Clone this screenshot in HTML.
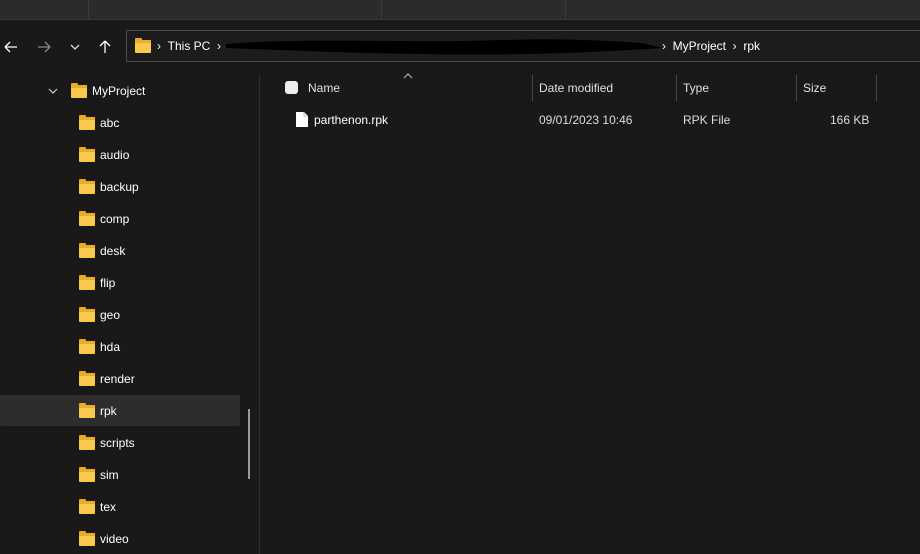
<!DOCTYPE html>
<html><head><style>
body{margin:0;width:920px;height:554px;background:#191919;font-family:"Liberation Sans",sans-serif;color:#fff;overflow:hidden;position:relative;font-size:12px}
.a{position:absolute}
.top{left:0;top:0;width:920px;height:19px;background:#2b2b2b;border-bottom:1px solid #3a3a3a}
.vd{width:1px;height:19px;background:#3c3c3c;top:0}
.addr{left:126px;top:30px;width:800px;height:32px;border:1px solid #4a4a4a;background:#1c1c1c;box-sizing:border-box}
.fold{width:16px;height:13px;background:#f8c94a;border-radius:1px}
.fold:before{content:"";position:absolute;left:0;top:-2px;width:7px;height:3px;background:#e7a928;border-radius:1px 1px 0 0}
.fold:after{content:"";position:absolute;left:0;top:0;width:16px;height:3px;background:#e9ad2e}
.t{font-size:12px;color:#fff}
.hd{font-size:12px;color:#e0e0e0}
.cd{width:1px;height:26px;background:#444;top:75px}
</style></head><body>
<div class="a top"></div>
<div class="a vd" style="left:88px"></div>
<div class="a vd" style="left:381px"></div>
<div class="a vd" style="left:565px"></div>
<svg class="a" style="left:0;top:36px" width="120" height="22" viewBox="0 0 120 22">
<path d="M5 11h12M5 11l5-5M5 11l5 5" stroke="#fff" stroke-width="1.3" fill="none"/>
<path d="M38 11h12M50 11l-5-5M50 11l-5 5" stroke="#888" stroke-width="1.3" fill="none"/>
<path d="M71 9l4 4 4-4" stroke="#ddd" stroke-width="1.3" fill="none"/>
<path d="M105 17V5M105 5l-5 5M105 5l5 5" stroke="#fff" stroke-width="1.3" fill="none"/>
</svg>
<div class="a addr"></div>
<div class="a fold" style="left:135px;top:40px"></div>
<div class="a t" style="left:157px;top:39px">›&nbsp;&nbsp;This PC&nbsp;&nbsp;›</div>
<svg class="a" style="left:222px;top:34px" width="450" height="26"><path d="M4 10 C80 4,150 8,240 7 C300 6,330 3,420 9 L440 14 C380 18,300 22,200 20 C120 19,60 16,4 14Z" fill="#000"/></svg>
<div class="a t" style="left:662px;top:39px">›&nbsp;&nbsp;MyProject&nbsp;&nbsp;›&nbsp;&nbsp;rpk</div>
<div class="a" style="left:0;top:395px;width:240px;height:31px;background:#2d2d2d;border-radius:2px"></div>
<div class="a" style="left:248px;top:409px;width:2px;height:70px;background:#9a9a9a"></div>
<div class="a" style="left:259px;top:75px;width:1px;height:479px;background:#2e2e2e"></div>
<svg class="a" style="left:47px;top:86px" width="12" height="10"><path d="M2 3l4 4 4-4" stroke="#ccc" stroke-width="1.2" fill="none"/></svg>
<div class="a fold" style="left:71px;top:85px"></div>
<div class="a t" style="left:92px;top:84px">MyProject</div>
<div class="a fold" style="left:79px;top:117px"></div><div class="a t" style="left:100px;top:116px">abc</div>
<div class="a fold" style="left:79px;top:149px"></div><div class="a t" style="left:100px;top:148px">audio</div>
<div class="a fold" style="left:79px;top:181px"></div><div class="a t" style="left:100px;top:180px">backup</div>
<div class="a fold" style="left:79px;top:213px"></div><div class="a t" style="left:100px;top:212px">comp</div>
<div class="a fold" style="left:79px;top:245px"></div><div class="a t" style="left:100px;top:244px">desk</div>
<div class="a fold" style="left:79px;top:277px"></div><div class="a t" style="left:100px;top:276px">flip</div>
<div class="a fold" style="left:79px;top:309px"></div><div class="a t" style="left:100px;top:308px">geo</div>
<div class="a fold" style="left:79px;top:341px"></div><div class="a t" style="left:100px;top:340px">hda</div>
<div class="a fold" style="left:79px;top:373px"></div><div class="a t" style="left:100px;top:372px">render</div>
<div class="a fold" style="left:79px;top:405px"></div><div class="a t" style="left:100px;top:404px">rpk</div>
<div class="a fold" style="left:79px;top:437px"></div><div class="a t" style="left:100px;top:436px">scripts</div>
<div class="a fold" style="left:79px;top:469px"></div><div class="a t" style="left:100px;top:468px">sim</div>
<div class="a fold" style="left:79px;top:501px"></div><div class="a t" style="left:100px;top:500px">tex</div>
<div class="a fold" style="left:79px;top:533px"></div><div class="a t" style="left:100px;top:532px">video</div>
<div class="a" style="left:285px;top:81px;width:13px;height:13px;background:#eee;border-radius:3px"></div>
<div class="a hd" style="left:308px;top:81px">Name</div>
<svg class="a" style="left:403px;top:73px" width="10" height="6"><path d="M1 5l4-4 4 4" stroke="#bbb" fill="none"/></svg>
<div class="a cd" style="left:532px"></div><div class="a hd" style="left:539px;top:81px">Date modified</div>
<div class="a cd" style="left:676px"></div><div class="a hd" style="left:683px;top:81px">Type</div>
<div class="a cd" style="left:796px"></div><div class="a hd" style="left:803px;top:81px">Size</div>
<div class="a cd" style="left:876px"></div>
<svg class="a" style="left:295px;top:111px" width="14" height="17"><path d="M1 1h8l4 4v11H1z" fill="#fff"/><path d="M9 1v4h4" fill="none" stroke="#bbb"/></svg>
<div class="a t" style="left:314px;top:113px">parthenon.rpk</div>
<div class="a t" style="left:539px;top:113px;color:#ddd">09/01/2023 10:46</div>
<div class="a t" style="left:683px;top:113px;color:#ddd">RPK File</div>
<div class="a t" style="left:830px;top:113px;color:#ddd">166 KB</div>
</body></html>
